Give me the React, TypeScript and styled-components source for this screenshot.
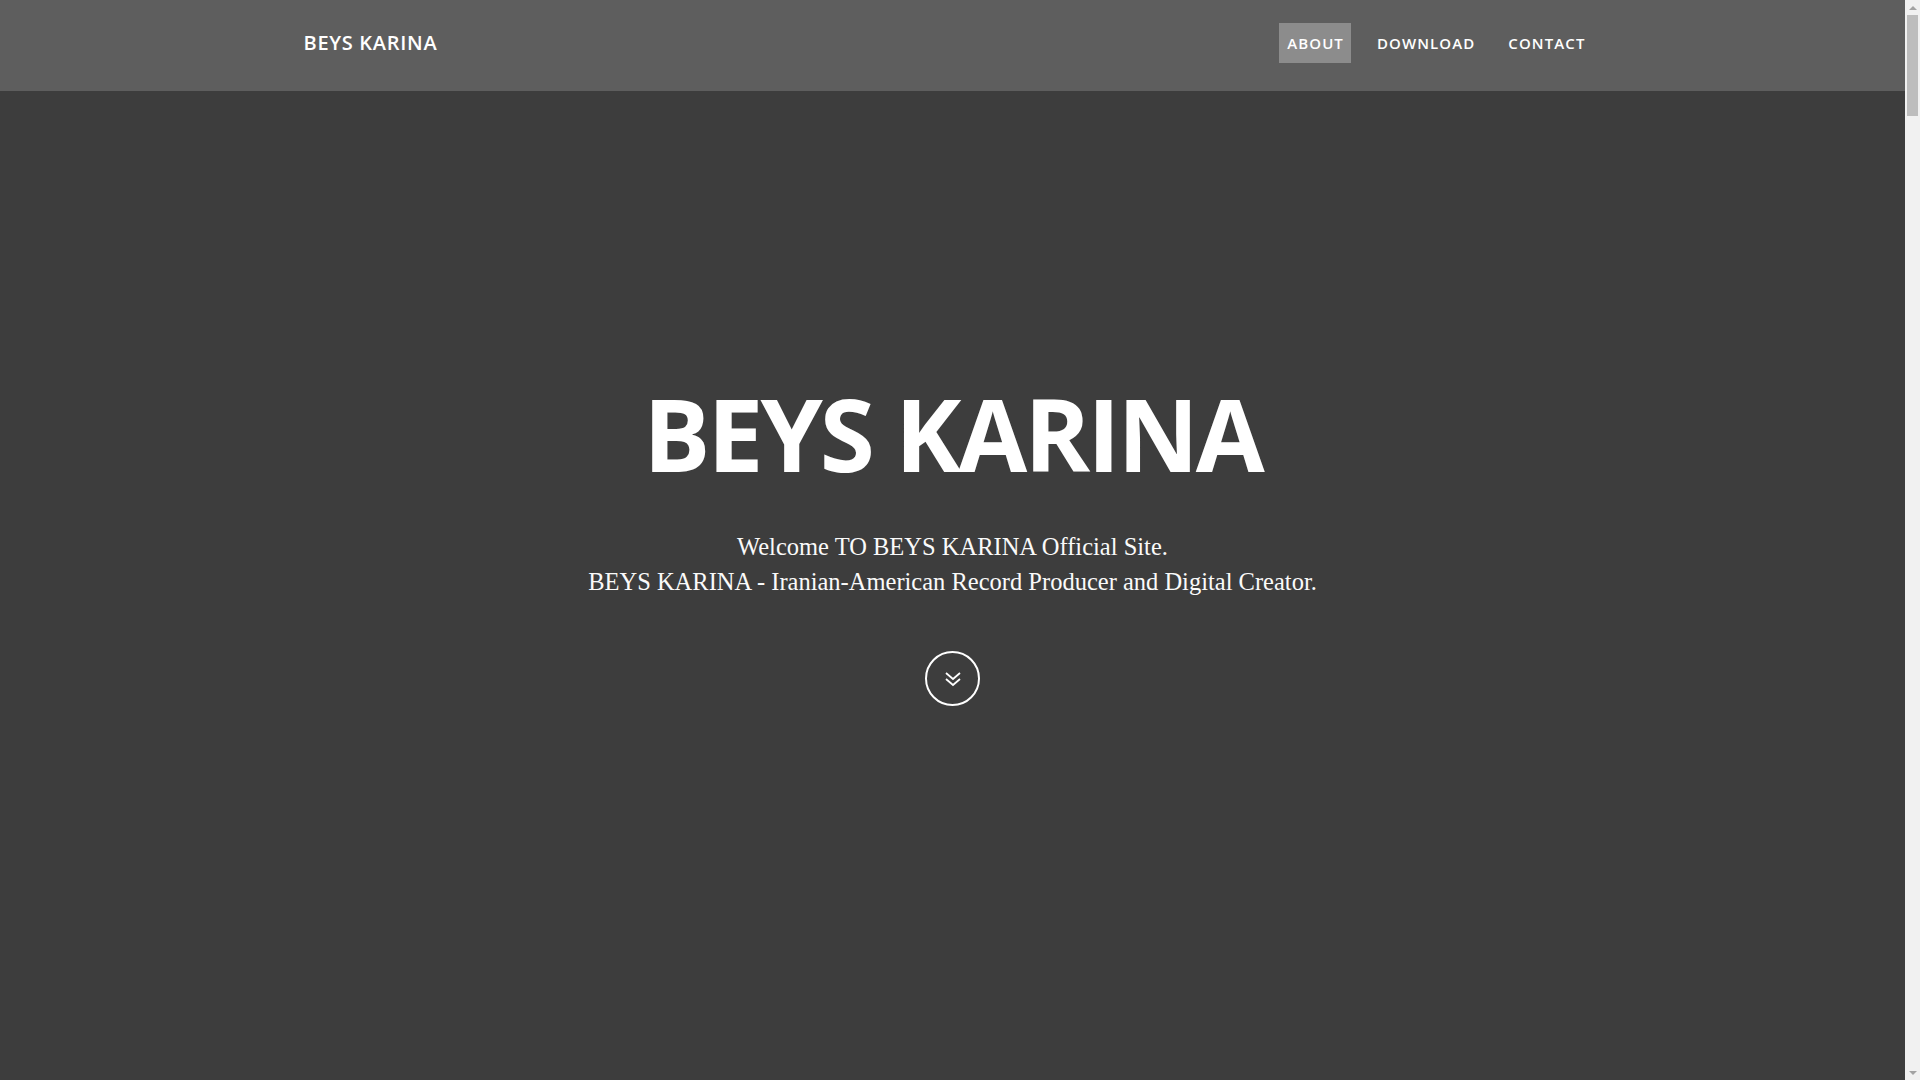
import React from 'react';
import styled, { createGlobalStyle } from 'styled-components';

const GlobalStyle = createGlobalStyle`
	html, body {
		margin: 0;
		padding: 0;
		background: #3d3d3d;
		overflow: hidden;
	}
	* {
		box-sizing: border-box;
	}
`;

const Shell = styled.div`
	display: flex;
	align-items: flex-start;
	height: 100vh;
	overflow: hidden;
`;

const Page = styled.div`
	flex: 1;
	min-width: 0;
	background: #3d3d3d;
	color: #fff;
	font-family: "Open Sans", "Liberation Sans", sans-serif;
`;

const ScrollRail = styled.div`
	width: 15px;
	height: 100vh;
	flex-shrink: 0;
	background: #f1f1f1;
	display: flex;
	flex-direction: column;
`;

const RailArrow = styled.div<{ $down?: boolean }>`
	height: 15px;
	display: flex;
	align-items: center;
	justify-content: center;
	&::before {
		content: '';
		width: 0;
		height: 0;
		border-left: 4px solid transparent;
		border-right: 4px solid transparent;
		${p => (p.$down ? 'border-top: 4px solid #a3a3a3;' : 'border-bottom: 4px solid #a3a3a3;')}
	}
`;

const RailTrack = styled.div`
	flex: 1;
	padding: 0 2px;
`;

const RailThumb = styled.div`
	height: 101px;
	background: #bdbdbd;
`;

const NavBar = styled.header`
	height: 91px;
	background: #5e5e5e;
`;

const NavInner = styled.div`
	width: 1300px;
	height: 100%;
	margin: 0 auto;
	padding: 0 10px 6px 0;
	display: flex;
	align-items: center;
	justify-content: space-between;
`;

const Brand = styled.a`
	font-size: 20px;
	font-weight: 600;
	letter-spacing: 0.7px;
	color: #fff;
	text-decoration: none;
	padding-left: 1px;
`;

const Menu = styled.nav`
	display: flex;
	align-items: center;
	gap: 18px;
`;

const MenuItem = styled.a<{ $active?: boolean }>`
	display: flex;
	align-items: center;
	height: 40px;
	padding: 0 7px 0 8px;
	font-size: 15px;
	font-weight: 600;
	letter-spacing: 1.1px;
	color: #fff;
	text-decoration: none;
	background: ${p => (p.$active ? '#8c8c8c' : 'transparent')};
`;

const Hero = styled.section`
	height: 990px;
	padding-top: 292px;
	display: flex;
	flex-direction: column;
	align-items: center;
	text-align: center;
`;

const Title = styled.h1`
	margin: 0 0 46px;
	font-size: 100px;
	line-height: 1;
	font-weight: 700;
	letter-spacing: -3px;
`;

const Intro = styled.p`
	margin: 0;
	font-family: "Liberation Serif", "DejaVu Serif", serif;
	font-size: 24.5px;
	line-height: 35px;
	color: #fafafa;
`;

const ScrollButton = styled.a`
	margin-top: 52px;
	width: 55px;
	height: 55px;
	border: 2px solid #fff;
	border-radius: 50%;
	display: flex;
	align-items: center;
	justify-content: center;
`;

const Filler = styled.section`
	height: 10000px;
	background: #3d3d3d;
`;

const ChevronsDown = () => (
	<svg width="16" height="16" viewBox="0 0 16 16" fill="none" stroke="#fff" strokeWidth="1.8">
		<polyline points="1,2 8,8 15,2" />
		<polyline points="1,8 8,14 15,8" />
	</svg>
);

const App = () => {
	return (
		<>
			<GlobalStyle />
			<Shell>
				<Page>
					<NavBar>
						<NavInner>
							<Brand href="#">BEYS KARINA</Brand>
							<Menu>
								<MenuItem href="#about" $active>ABOUT</MenuItem>
								<MenuItem href="#download">DOWNLOAD</MenuItem>
								<MenuItem href="#contact">CONTACT</MenuItem>
							</Menu>
						</NavInner>
					</NavBar>
					<Hero>
						<Title>BEYS KARINA</Title>
						<Intro>
							Welcome TO BEYS KARINA Official Site.
							<br />
							BEYS KARINA - Iranian-American Record Producer and Digital Creator.
						</Intro>
						<ScrollButton href="#about">
							<ChevronsDown />
						</ScrollButton>
					</Hero>
					<Filler id="about" />
				</Page>
				<ScrollRail>
					<RailArrow />
					<RailTrack>
						<RailThumb />
					</RailTrack>
					<RailArrow $down />
				</ScrollRail>
			</Shell>
		</>
	);
};

export default App;
